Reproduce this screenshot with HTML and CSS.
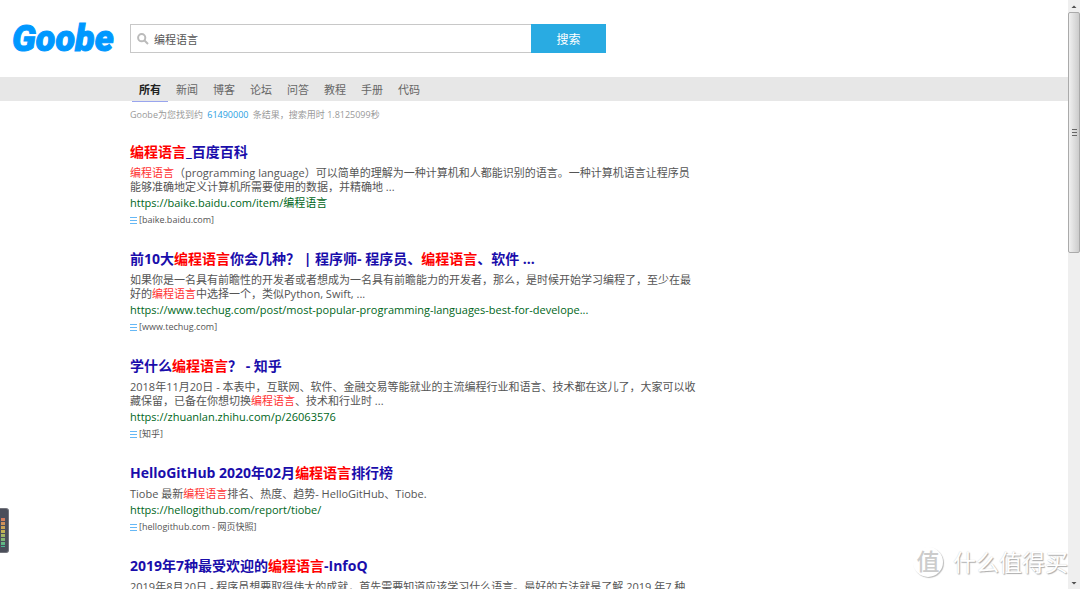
FILE: index.html
```html
<!DOCTYPE html>
<html lang="zh-CN">
<head>
<meta charset="utf-8">
<title>编程语言 - Goobe</title>
<link rel="stylesheet" href="styles.css">
</head>
<body>
<div class="page">
  <header class="header">
    <a class="logo" href="#">Goobe</a>
    <form class="search">
      <label class="field">
        <svg class="glass" viewBox="0 0 12 12" aria-label="搜索"><circle cx="4.7" cy="4.7" r="3.6"/><path d="M7.5 7.5 11 11"/></svg>
        <input class="query" type="text" value="编程语言" aria-label="关键词">
      </label>
      <button class="submit" type="button">搜索</button>
    </form>
  </header>
  <nav class="tabs">
    <a class="tab active" href="#">所有</a>
    <a class="tab" href="#">新闻</a>
    <a class="tab" href="#">博客</a>
    <a class="tab" href="#">论坛</a>
    <a class="tab" href="#">问答</a>
    <a class="tab" href="#">教程</a>
    <a class="tab" href="#">手册</a>
    <a class="tab" href="#">代码</a>
  </nav>
  <main class="results">
    <p class="stats">Goobe为您找到约 <span class="count">61490000</span> 条结果，搜索用时 1.8125099秒</p>
    <article class="result">
      <h2 class="title"><a href="#"><em>编程语言</em>_百度百科</a></h2>
      <p class="snippet"><em>编程语言</em>（programming language）可以简单的理解为一种计算机和人都能识别的语言。一种计算机语言让程序员<br>能够准确地定义计算机所需要使用的数据，并精确地 ...</p>
      <a class="url" href="#">https://baike.baidu.com/item/编程语言</a>
      <p class="source"><svg class="lines" viewBox="0 0 7 9"><path d="M0 1.500h7M0 4.500h7M0 7.500h7"/></svg>[baike.baidu.com]</p>
    </article>
    <article class="result">
      <h2 class="title"><a href="#">前10大<em>编程语言</em>你会几种？ | 程序师- 程序员、<em>编程语言</em>、软件 ...</a></h2>
      <p class="snippet">如果你是一名具有前瞻性的开发者或者想成为一名具有前瞻能力的开发者，那么，是时候开始学习编程了，至少在最<br>好的<em>编程语言</em>中选择一个，类似Python, Swift, ...</p>
      <a class="url" href="#">https://www.techug.com/post/most-popular-programming-languages-best-for-develope...</a>
      <p class="source"><svg class="lines" viewBox="0 0 7 9"><path d="M0 1.500h7M0 4.500h7M0 7.500h7"/></svg>[www.techug.com]</p>
    </article>
    <article class="result">
      <h2 class="title"><a href="#">学什么<em>编程语言</em>？ - 知乎</a></h2>
      <p class="snippet">2018年11月20日 - 本表中，互联网、软件、金融交易等能就业的主流编程行业和语言、技术都在这儿了，大家可以收<br>藏保留，已备在你想切换<em>编程语言</em>、技术和行业时 ...</p>
      <a class="url" href="#">https://zhuanlan.zhihu.com/p/26063576</a>
      <p class="source"><svg class="lines" viewBox="0 0 7 9"><path d="M0 1.500h7M0 4.500h7M0 7.500h7"/></svg>[知乎]</p>
    </article>
    <article class="result">
      <h2 class="title"><a href="#">HelloGitHub 2020年02月<em>编程语言</em>排行榜</a></h2>
      <p class="snippet">Tiobe 最新<em>编程语言</em>排名、热度、趋势- HelloGitHub、Tiobe.</p>
      <a class="url" href="#">https://hellogithub.com/report/tiobe/</a>
      <p class="source"><svg class="lines" viewBox="0 0 7 9"><path d="M0 1.500h7M0 4.500h7M0 7.500h7"/></svg>[hellogithub.com - 网页快照]</p>
    </article>
    <article class="result">
      <h2 class="title"><a href="#">2019年7种最受欢迎的<em>编程语言</em>-InfoQ</a></h2>
      <p class="snippet">2019年8月20日 - 程序员想要取得伟大的成就，首先需要知道应该学习什么语言。最好的方法就是了解 2019 年7 种</p>
    </article>
  </main>
</div>
<div class="scrollbar">
  <svg class="arrow" viewBox="0 0 12 12"><path d="M3.500 8 6 5.500 8.500 8z"/></svg>
  <div class="thumb"><svg class="grip" viewBox="0 0 5 7"><path d="M0 .5h5M0 3.500h5M0 6.500h5"/></svg></div>
  <svg class="arrow arrow-down" viewBox="0 0 12 12"><path d="M3.500 5 6 7.500 8.500 5z"/></svg>
</div>
<div class="meter"><div class="levels"></div></div>
<div class="watermark"><span class="seal">值</span><span>什么值得买</span></div>
</body>
</html>
```
FILE: styles.css
```css
* { box-sizing: border-box; }
body {
  margin: 0;
  height: 100vh;
  display: flex;
  overflow: hidden;
  background: #fff;
  color: #555;
  font-family: "Open Sans", "Noto Sans CJK SC", sans-serif;
  font-size: 11px;
}
a { text-decoration: none; }
p, h2 { margin: 0; }
em { font-style: normal; }

.page { flex: 1; min-width: 0; }
.header {
  display: flex;
  align-items: center;
  height: 77px;
  padding-left: 12px;
}
.logo {
  width: 118px;
  color: #0098ff;
  font: italic 900 36px/40px Roboto, sans-serif;
  -webkit-text-stroke: 1px #0098ff;
}
.search { display: flex; width: 476px; height: 29px; }
.field {
  flex: 1;
  display: flex;
  align-items: center;
  gap: 5px;
  padding-left: 6px;
  border: 1px solid #c8c8c8;
  border-right: 0;
}
.glass { width: 12px; height: 12px; fill: none; stroke: #bbb; stroke-width: 2; }
.query {
  flex: 1;
  min-width: 0;
  padding: 0;
  border: 0;
  outline: 0;
  background: none;
  color: #555;
  font: inherit;
}
.submit {
  width: 75px;
  padding: 0;
  border: 0;
  background: #29abe2;
  color: #fff;
  font: inherit;
  font-size: 12px;
}

.tabs {
  display: flex;
  gap: 1px;
  height: 24px;
  padding-left: 132px;
  background: #e7e7e7;
}
.tab {
  width: 36px;
  height: 25px;
  line-height: 25px;
  text-align: center;
  color: #666;
}
.active { border-bottom: 1px solid #99a5ee; color: #222; font-weight: 700; }

.results { padding-left: 130px; }
.stats {
  padding-top: 6px;
  margin-bottom: 19px;
  font-size: 9px;
  line-height: 16px;
  color: #999;
}
.count { margin: 0 2px; color: #29a0e2; }
.result { margin-bottom: 21px; white-space: nowrap; }
.title { margin-bottom: 4px; font-size: 14px; line-height: 20px; }
.title a { color: #1a0dab; }
.title em { color: #f00; }
.snippet { line-height: 14px; }
.snippet em { color: #f33; }
.url { display: block; color: #006621; font-size: 11px; line-height: 18px; }
.source {
  display: flex;
  align-items: center;
  gap: 2px;
  font-size: 9px;
  line-height: 16px;
}
.lines { width: 7px; height: 9px; stroke: #66b8f5; stroke-width: 1; }

.scrollbar {
  display: flex;
  flex-direction: column;
  width: 12px;
  background: #efefef;
}
.arrow { width: 12px; height: 12px; fill: #505050; }
.arrow-down { margin-top: auto; }
.thumb {
  display: flex;
  align-items: center;
  justify-content: center;
  height: 41%;
  border: 1px solid #aaa;
  border-radius: 2px;
  background: linear-gradient(90deg, #f0f0f0, #ccc);
}
.grip { width: 5px; height: 7px; stroke: #666; }

.meter {
  position: absolute;
  left: 0;
  bottom: 36px;
  width: 9px;
  height: 45px;
  padding: 9px 3px 5px 1px;
  border: 1px solid #73757d;
  border-left: 0;
  border-radius: 0 3px 3px 0;
  background: #4b4e5a;
}
.levels {
  height: 100%;
  background:
    repeating-linear-gradient(transparent 0 3px, #4b4e5a 3px 4px),
    linear-gradient(#d47860, #c7b351 45%, #45b894);
}
.watermark {
  position: absolute;
  right: 12px;
  bottom: 10px;
  display: flex;
  align-items: center;
  gap: 10px;
  color: #fff;
  font-size: 23px;
  line-height: 34px;
  text-shadow: 1px 1px 1px #aaa, 0 0 1px #ccc;
}
.seal {
  width: 30px;
  height: 30px;
  border-radius: 50%;
  box-shadow: 1px 1px 1px #bbb;
  color: #ccc;
  font-weight: 500;
  line-height: 28px;
  text-align: center;
  text-shadow: none;
}
```
